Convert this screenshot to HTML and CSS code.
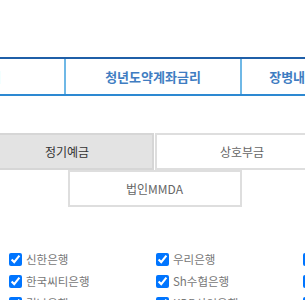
FILE: index.html
```html
<!DOCTYPE html>
<html lang="ko">
<head>
<meta charset="utf-8">
<link rel="stylesheet" href="styles.css">
</head>
<body>
<div class="page">
  <nav class="tabs">
    <div class="tab">예금금리</div>
    <div class="tab">청년도약계좌금리</div>
    <div class="tab">장병내일준비적금금리</div>
  </nav>
  <div class="types">
    <div class="type active">정기예금</div>
    <div class="type">상호부금</div>
    <div class="type">법인MMDA</div>
  </div>
  <ul class="banks">
    <li><label><input type="checkbox" checked> 신한은행</label></li>
    <li><label><input type="checkbox" checked> 우리은행</label></li>
    <li><label><input type="checkbox" checked> 하나은행</label></li>
    <li><label><input type="checkbox" checked> 한국씨티은행</label></li>
    <li><label><input type="checkbox" checked> Sh수협은행</label></li>
    <li><label><input type="checkbox" checked> 대구은행</label></li>
    <li><label><input type="checkbox" checked> 경남은행</label></li>
    <li><label><input type="checkbox" checked> KDB산업은행</label></li>
    <li><label><input type="checkbox" checked> 광주은행</label></li>
  </ul>
</div>
</body>
</html>
```

FILE: styles.css
```css
html, body {
  margin: 0;
  padding: 0;
  background: #ffffff;
  overflow: hidden;
}
body {
  font-family: "Noto Sans CJK KR", "Noto Sans", sans-serif;
  width: 305px;
  height: 300px;
}
.page {
  padding-top: 57px;
}
.tabs {
  display: flex;
  margin-left: -110px;
  width: 600px;
  border-top: 2px solid #1f5fa8;
  border-bottom: 2px solid #2d89d2;
  height: 35px;
}
.tab {
  flex: 0 0 174px;
  border-right: 2px solid #6fb8e6;
  display: flex;
  align-items: center;
  justify-content: center;
  font-size: 13px;
  font-weight: bold;
  color: #3f7dc2;
  white-space: nowrap;
}
.types {
  margin-top: 37px;
  margin-left: -20px;
  width: 349px;
  display: flex;
  flex-wrap: wrap;
  justify-content: center;
  column-gap: 1px;
}
.type {
  box-sizing: border-box;
  width: 174px;
  height: 37px;
  border: 2px solid #dedede;
  background: #fff;
  display: flex;
  align-items: center;
  justify-content: center;
  font-size: 12px;
  color: #666;
}
.type.active {
  background: #e3e3e3;
  border-color: #d6d6d6;
  color: #333;
}
.banks {
  list-style: none;
  margin: 46px 0 0 5px;
  padding: 0;
  display: grid;
  grid-template-columns: repeat(3, 147px);
  row-gap: 9px;
  width: 441px;
}
.banks li {
  font-size: 11.5px;
  color: #777;
  height: 13px;
  line-height: 13px;
  white-space: nowrap;
}
.banks label {
  display: flex;
  align-items: center;
  gap: 4px;
}
.banks input {
  width: 13px;
  height: 13px;
  margin: 0 0 0 4px;
}
```
